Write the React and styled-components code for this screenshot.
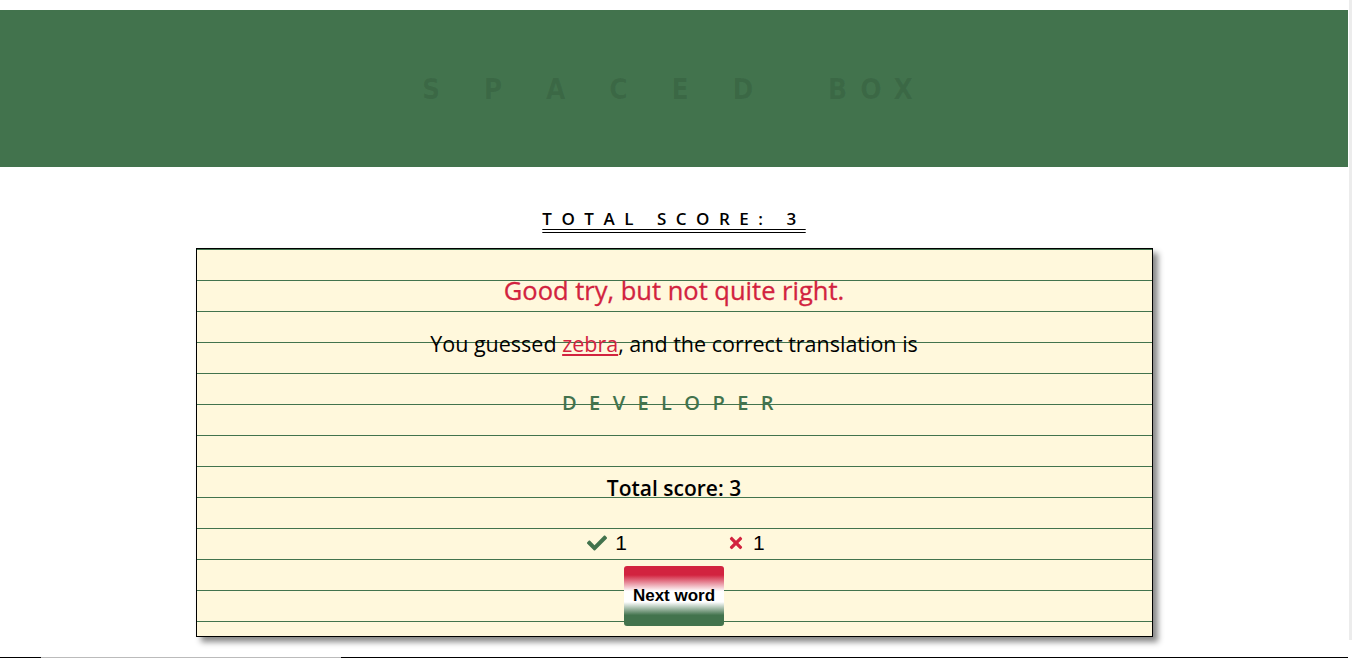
import React from 'react';
import styled, {createGlobalStyle} from "styled-components";
import {FaCheck, FaTimes} from "react-icons/fa";

const GlobalStyle = createGlobalStyle`
  html, body {
    margin: 0;
    padding: 0;
    background: #fff;
  }
  body {
    font-family: "Open Sans", "Noto Sans", sans-serif;
    overflow: hidden;
  }
`

const Frame = styled.div`
  display: flex;
  min-height: 658px;
`

const Page = styled.div`
  flex: 1;
  display: flex;
  flex-direction: column;
  align-items: center;
  padding-top: 10px;
`

const Rail = styled.div`
  width: 3px;
  margin-left: 1px;
  height: 640px;
  background: #ececec;
`

const Header = styled.header`
  align-self: stretch;
  height: 157px;
  background: #42734d;
  display: flex;
  align-items: center;
  justify-content: center;
`

const Brand = styled.h1`
  margin: 0;
  font-family: "DejaVu Sans Condensed", "Liberation Sans Narrow", sans-serif;
  font-weight: bold;
  font-size: 28px;
  letter-spacing: 13px;
  word-spacing: 9px;
  white-space: pre;
  color: rgba(0, 0, 0, 0.09);
  transform: translateY(1px);
`

const ScoreTitle = styled.h2`
  margin: 40px 0 0;
  font-family: "Open Sans", "DejaVu Sans", sans-serif;
  font-weight: 600;
  font-size: 17px;
  line-height: 24px;
  letter-spacing: 0.56em;
  color: #000;
  text-decoration: underline double;
  text-underline-offset: 4px;
`

const Card = styled.section`
  box-sizing: border-box;
  width: 957px;
  height: 389px;
  margin-top: 17px;
  border: 1px solid #000;
  background-color: #fff8dc;
  background-image: repeating-linear-gradient(to bottom, #42734d 0, #42734d 1px, transparent 1px, transparent 31px);
  box-shadow: 5px 5px 6px #888;
  display: flex;
  flex-direction: column;
  align-items: center;
  padding-top: 26px;
  font-family: "Open Sans", "Noto Sans", sans-serif;
`

const Verdict = styled.div`
  height: 30px;
  line-height: 30px;
  font-size: 25.5px;
  font-weight: 500;
  color: #d2233f;
  letter-spacing: 0;
  -webkit-text-stroke: 0.3px #d2233f;
`

const Line = styled.div`
  height: 30px;
  line-height: 30px;
  margin-top: ${p => p.$gap}px;
  font-size: ${p => p.$size || 20}px;
  font-weight: ${p => p.$weight || 'normal'};
  color: ${p => p.$color || '#000'};
  letter-spacing: ${p => p.$spacing || '0'};
`

const Guess = styled.span`
  color: #d2233f;
  text-decoration: underline;
`

const Tally = styled.div`
  display: flex;
  gap: 100px;
  height: 30px;
  margin-top: 25px;
  align-items: center;
  transform: translateX(2px);
`

const TallyItem = styled.div`
  display: flex;
  align-items: center;
  gap: 8px;
  font-family: "Liberation Sans", Arial, sans-serif;
  font-size: 21px;
  color: #000;
  svg {
    color: ${p => p.$color};
  }
`

const NextButton = styled.button`
  width: 100px;
  height: 60px;
  margin-top: 8px;
  border: none;
  border-radius: 3px;
  background: linear-gradient(to bottom, #d2233f 15%, #fff 42%, #fff 60%, #42734d 82%);
  font-family: "Liberation Sans", Arial, sans-serif;
  font-weight: bold;
  font-size: 17px;
  color: #000;
  padding: 0;
  cursor: pointer;
`

const Footer = styled.div`
  align-self: stretch;
  display: flex;
  margin-top: 20px;
  height: 2px;
`

const FooterPart = styled.div`
  width: ${p => p.$width ? p.$width + 'px' : 'auto'};
  flex: ${p => p.$width ? 'none' : 1};
  border-top: 1px solid ${p => p.$color};
`

function App() {
    return (
        <Frame>
            <GlobalStyle/>
            <Page>
                <Header>
                    <Brand>{'S P A C E D  BOX'}</Brand>
                </Header>
                <ScoreTitle>TOTAL SCORE: 3</ScoreTitle>
                <Card>
                    <Verdict>Good try, but not quite right.</Verdict>
                    <Line $gap={24} $size={21.5}>
                        You guessed <Guess>zebra</Guess>, and the correct translation is
                    </Line>
                    <Line $gap={29} $weight={600} $color="#42734d" $spacing="0.62em">
                        DEVELOPER
                    </Line>
                    <Line $gap={55} $weight={600} $size={21}>
                        Total score: 3
                    </Line>
                    <Tally>
                        <TallyItem $color="#42734d"><FaCheck size={20}/>1</TallyItem>
                        <TallyItem $color="#d2233f"><FaTimes size={18}/>1</TallyItem>
                    </Tally>
                    <NextButton>Next word</NextButton>
                </Card>
                <Footer>
                    <FooterPart $width={41} $color="#000"/>
                    <FooterPart $width={300} $color="#bbb"/>
                    <FooterPart $color="#000"/>
                </Footer>
            </Page>
            <Rail/>
        </Frame>
    );
}

export default App;
